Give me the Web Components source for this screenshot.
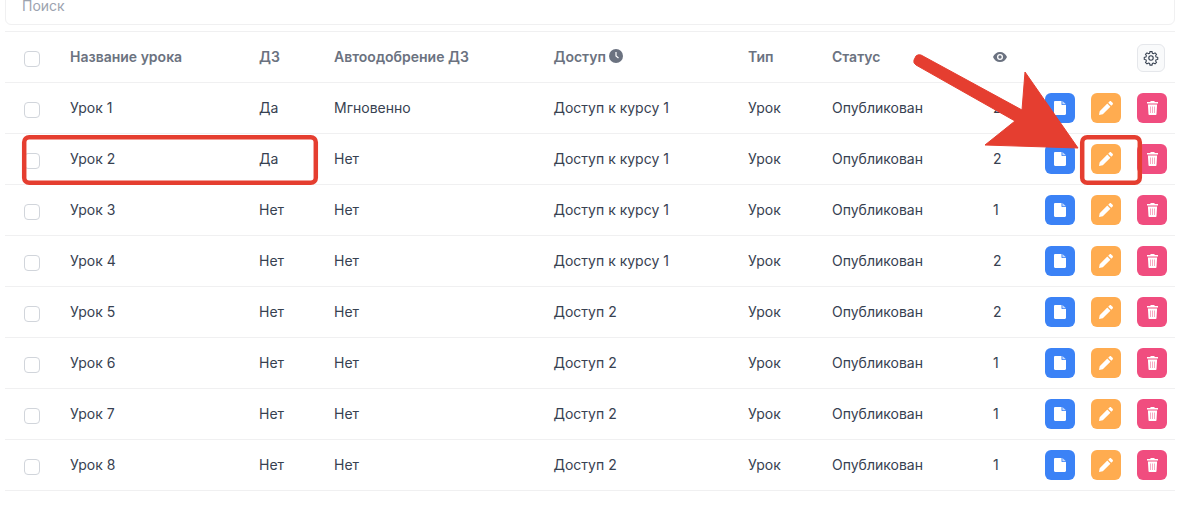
<!DOCTYPE html>
<html>
<head>
<meta charset="utf-8">
<style>
  html, body { margin: 0; background: #fff; height: 505px; overflow: hidden; }
  body { font-family: Inter, "Noto Sans", sans-serif; font-size: 14px; color: #374151; position: relative; }
</style>
</head>
<body>
<lesson-page></lesson-page>

<script>
const columns = "65px 189px 75px 219.5px 194.5px 84px 161px 52px 130px";

const icons = {
  file: `<svg width="12" height="14" viewBox="0 0 12 14"><path fill="#fff" d="M1.200 0H7.500v3.200c0 .5.400.9.900.9H12v8.700c0 .7-.5 1.200-1.200 1.200H1.200C.5 14 0 13.500 0 12.800V1.200C0 .5.500 0 1.200 0z"/><path fill="#fff" opacity=".7" d="M8.400 0L12 3.300H8.400z"/></svg>`,
  pen: `<svg width="14" height="14" viewBox="0 0 14 14"><path fill="#fff" d="M0 14l.7-3.800L8.300 2.600l3.100 3.100-7.600 7.600zM9.200 1.700L10.500.4c.5-.5 1.200-.5 1.700 0l1.400 1.400c.5.5.5 1.200 0 1.700l-1.300 1.300z"/></svg>`,
  trash: `<svg width="11" height="14" viewBox="0 0 11 14"><path fill="#fff" d="M3.700 0h3.600l.5 1H11v1.500H0V1h3.200z"/><path fill="#fff" d="M.9 3.400h9.200l-.6 9.600c0 .6-.5 1-1 1H2.500c-.5 0-1-.4-1-1z"/><path stroke="#f7a9c2" stroke-width="1" d="M3.500 5.500v6.500M5.500 5.500v6.500M7.500 5.500v6.500"/></svg>`
};

class SearchBox extends HTMLElement {
  constructor() {
    super();
    this.attachShadow({ mode: "open" }).innerHTML = `
      <style>
        :host { display: flex; align-items: center; box-sizing: border-box; height: 40px; margin: -15px 16px 6px 5px;
          padding-left: 16px; border: 1px solid #f0f0f1; border-radius: 6px; color: #9ca3af; font-size: 14px; }
      </style>
      <span><slot></slot></span>`;
  }
}

class CheckBox extends HTMLElement {
  constructor() {
    super();
    this.attachShadow({ mode: "open" }).innerHTML = `
      <style>
        :host { display: block; box-sizing: border-box; width: 16px; height: 16px; margin: 4px 0 0 19px;
          border: 1px solid #d1d5db; border-radius: 4px; background: #fff; }
      </style>`;
  }
}

class ActionButton extends HTMLElement {
  constructor() {
    super();
    const kind = this.getAttribute("kind");
    const bg = { file: "#3b82f6", pen: "#ffac50", trash: "#f04d7f" }[kind];
    this.attachShadow({ mode: "open" }).innerHTML = `
      <style>
        :host { display: flex; align-items: center; justify-content: center; width: 30px; height: 30px;
          border-radius: 6px; background: ${bg}; }
        svg { display: block; }
      </style>
      ${icons[kind]}`;
  }
}

class TableHead extends HTMLElement {
  constructor() {
    super();
    this.attachShadow({ mode: "open" }).innerHTML = `
      <style>
        :host { display: grid; grid-template-columns: ${columns}; align-items: center; box-sizing: border-box; height: 52px;
          margin: 0 16px 0 5px; border-top: 1px solid #f0f0f1; border-bottom: 1px solid #f0f0f1;
          font-weight: 600; font-size: 14px; color: #6b7280; }
        span { margin-top: -2px; }
        .access { display: flex; align-items: center; gap: 3px; }
        .views { margin-top: 0; }
        .gear { display: flex; align-items: center; justify-content: center; box-sizing: border-box; width: 28px; height: 28px;
          margin: 1px 0 0 92px; background: #f9fafb; border: 1px solid #e5e7eb; border-radius: 6px; }
        svg { display: block; }
      </style>
      <check-box></check-box>
      <span>Название урока</span>
      <span>ДЗ</span>
      <span>Автоодобрение ДЗ</span>
      <span class="access">Доступ
        <svg width="14" height="14" viewBox="0 0 14 14"><circle cx="7" cy="7" r="7" fill="#6b7280"/><path d="M7 3v4l2.500 2" fill="none" stroke="#fff" stroke-width="1.200"/></svg>
      </span>
      <span>Тип</span>
      <span>Статус</span>
      <span class="views">
        <svg width="14" height="10" viewBox="0 0 14 10"><path fill="#6b7280" fill-rule="evenodd" d="M7 0c3.200 0 5.800 2 7 5-1.200 3-3.800 5-7 5S1.200 8 0 5c1.200-3 3.800-5 7-5zm0 2a3 3 0 100 6 3 3 0 000-6zm0 1.300a1.700 1.700 0 110 3.400 1.700 1.700 0 010-3.400z"/></svg>
      </span>
      <div class="gear">
        <svg width="16" height="16" viewBox="0 0 24 24" fill="none" stroke="#374151" stroke-width="1.700"><path d="M10.300 2.600h3.400l.6 2.700 1.900.8 2.400-1.500 2.400 2.400-1.500 2.400.8 1.900 2.700.6v3.400l-2.700.6-.8 1.900 1.500 2.400-2.400 2.400-2.400-1.500-1.900.8-.6 2.700h-3.400l-.6-2.700-1.900-.8-2.400 1.500-2.400-2.400 1.500-2.400-.8-1.900-2.700-.6v-3.400l2.700-.6.8-1.900-1.500-2.400 2.400-2.400 2.400 1.500 1.900-.8z" transform="translate(12 12) scale(.92) translate(-12 -13)"/><circle cx="12" cy="12" r="3.300"/></svg>
      </div>`;
  }
}

class LessonRow extends HTMLElement {
  constructor() {
    super();
    const a = (n) => this.getAttribute(n);
    this.attachShadow({ mode: "open" }).innerHTML = `
      <style>
        :host { display: grid; grid-template-columns: ${columns}; align-items: center; box-sizing: border-box; height: 51px;
          margin: 0 16px 0 5px; border-bottom: 1px solid #f0f0f1; font-size: 14px; color: #374151; }
        span { margin-top: -2px; }
        .actions { display: flex; gap: 16px; }
      </style>
      <check-box></check-box>
      <span>${a("name")}</span>
      <span>${a("hw")}</span>
      <span>${a("auto")}</span>
      <span>${a("access")}</span>
      <span>Урок</span>
      <span>Опубликован</span>
      <span>${a("views")}</span>
      <div class="actions">
        <action-button kind="file"></action-button>
        <action-button kind="pen"></action-button>
        <action-button kind="trash"></action-button>
      </div>`;
  }
}

// red marks drawn on top of the screenshot
class MarkupLayer extends HTMLElement {
  constructor() {
    super();
    this.attachShadow({ mode: "open" }).innerHTML = `
      <style>
        :host { position: absolute; left: 0; top: 0; width: 1191px; height: 505px; pointer-events: none; }
        svg { display: block; }
      </style>
      <svg width="1191" height="505" viewBox="0 0 1191 505">
        <g fill="none" stroke="#e53e30" stroke-width="4.500">
          <rect x="24.200" y="137.200" width="291.600" height="45.600" rx="5"/>
          <rect x="1082.200" y="137.200" width="57.600" height="45.600" rx="5"/>
        </g>
        <path fill="#e53e30" stroke="#e53e30" stroke-width="1" stroke-linejoin="round" d="M921 55Q918 54 916 56L914 60Q913 63 916 65L1015 121 985 145 1078 148 1025 72 1022 110z"/>
      </svg>`;
  }
}

class LessonPage extends HTMLElement {
  constructor() {
    super();
    const rows = [
      ["Урок 1", "Да", "Мгновенно", "Доступ к курсу 1", 2],
      ["Урок 2", "Да", "Нет", "Доступ к курсу 1", 2],
      ["Урок 3", "Нет", "Нет", "Доступ к курсу 1", 1],
      ["Урок 4", "Нет", "Нет", "Доступ к курсу 1", 2],
      ["Урок 5", "Нет", "Нет", "Доступ 2", 2],
      ["Урок 6", "Нет", "Нет", "Доступ 2", 1],
      ["Урок 7", "Нет", "Нет", "Доступ 2", 1],
      ["Урок 8", "Нет", "Нет", "Доступ 2", 1]
    ];
    this.attachShadow({ mode: "open" }).innerHTML = `
      <style>:host { display: block; }</style>
      <search-box>Поиск</search-box>
      <table-head></table-head>
      ${rows.map((r) => `<lesson-row name="${r[0]}" hw="${r[1]}" auto="${r[2]}" access="${r[3]}" views="${r[4]}"></lesson-row>`).join("")}
      <markup-layer></markup-layer>`;
  }
}

customElements.define("search-box", SearchBox);
customElements.define("check-box", CheckBox);
customElements.define("action-button", ActionButton);
customElements.define("table-head", TableHead);
customElements.define("lesson-row", LessonRow);
customElements.define("markup-layer", MarkupLayer);
customElements.define("lesson-page", LessonPage);
</script>
</body>
</html>
